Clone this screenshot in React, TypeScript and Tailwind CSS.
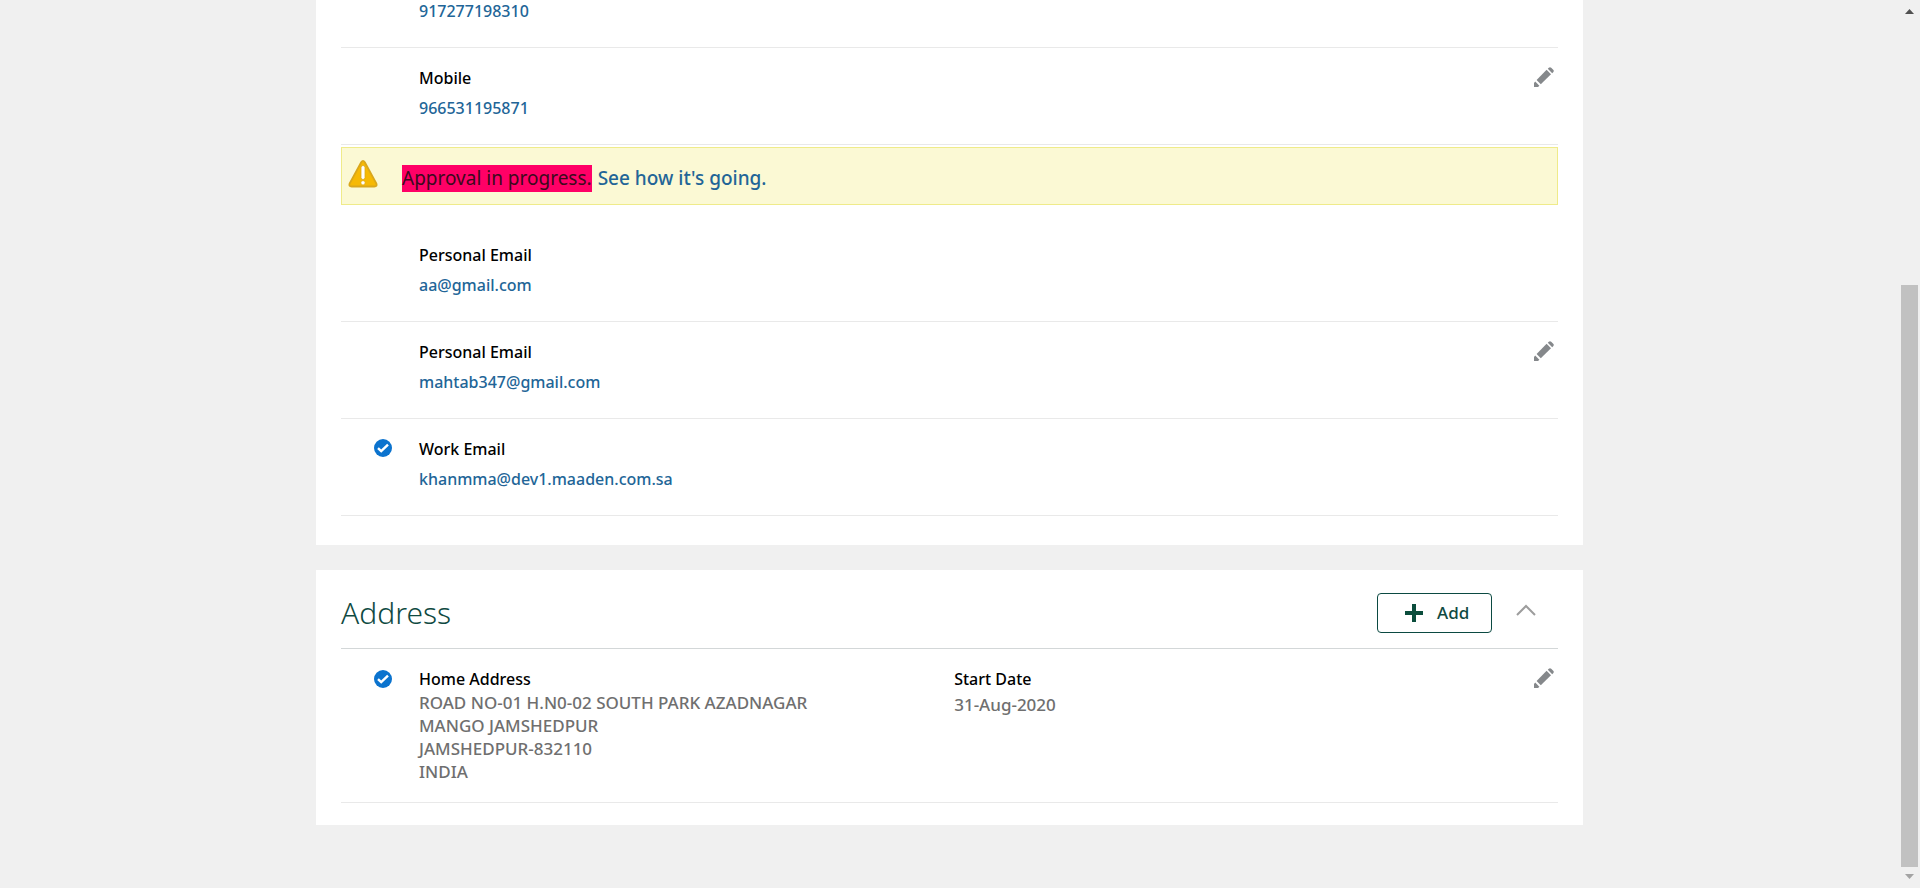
import type { ReactNode } from "react";

function PencilIcon() {
  return (
    <svg viewBox="0 0 20 20" className="size-5 fill-[#85888b]" aria-hidden="true">
      <path d="M0 20v-4l1.2-1.4 4.2 4.2L4 20z" />
      <path d="m2.6 13 10-10.2 4.4 4.4-10.2 10z" />
      <path d="m13.8 1.8 1-1q1.2-1.2 2.4 0l2 2q1.2 1.2 0 2.4l-1 1z" />
    </svg>
  );
}

function PrimaryIcon() {
  return (
    <svg viewBox="0 0 18 18" className="size-[18px]" role="img" aria-label="Primary">
      <circle cx="9" cy="9" r="9" fill="#0b73ce" />
      <path d="m4 9.2 3.2 3 6.8-6.6" fill="none" stroke="#fff" strokeWidth="2.4" />
    </svg>
  );
}

function WarningIcon() {
  return (
    <svg viewBox="0 0 30 28" className="h-7 w-[30px]" role="img" aria-label="Warning">
      <path
        d="M13.2 2.2q1.8-2.6 3.6 0l11.6 21.4q1 2.9-2 2.9H3.6q-3 0-2-2.9z"
        fill="#f6b904"
        stroke="#d9a71c"
        strokeWidth="1.8"
      />
      <rect x="13" y="5.5" width="4" height="14" rx="2" fill="#fff" stroke="#d9a71c" strokeWidth="0.8" />
      <circle cx="15" cy="22.8" r="2.1" fill="#fff" stroke="#d9a71c" strokeWidth="0.6" />
    </svg>
  );
}

function EditButton({ label }: { label: string }) {
  return (
    <button type="button" aria-label={label} className="mt-[19px] mr-1 self-start">
      <PencilIcon />
    </button>
  );
}

type ContactProps = { label: string; value: string; href: string; primary?: boolean; editable?: boolean };

function ContactRow({ label, value, href, primary, editable }: ContactProps) {
  return (
    <li className="flex border-b border-[#e9e9e9]">
      <div className="w-[78px] shrink-0 pt-5 pl-[33px]">{primary && <PrimaryIcon />}</div>
      <div className="grow pt-[15px] pb-[21px]">
        <div className="leading-[30px] text-black">{label}</div>
        <a href={href} className="block leading-[30px] text-[#226597]">
          {value}
        </a>
      </div>
      {editable && <EditButton label={`Edit ${label}`} />}
    </li>
  );
}

function Card({ children, className }: { children: ReactNode; className: string }) {
  return <section className={`bg-white pr-[25px] pl-[25px] ${className}`}>{children}</section>;
}

function ScrollBar() {
  return (
    <div aria-hidden="true" className="flex h-screen w-[21px] shrink-0 flex-col items-center pt-[9px] pb-[9px]">
      <svg viewBox="0 0 9 5" className="h-[5px] w-[9px] fill-[#505050]">
        <path d="M0 5 4.5 0 9 5z" />
      </svg>
      <div className="mt-[271px] mb-[7px] w-[17px] grow bg-[#c1c1c1]" />
      <svg viewBox="0 0 9 5" className="h-[5px] w-[9px] fill-[#a3a3a3]">
        <path d="M0 0h9L4.5 5z" />
      </svg>
    </div>
  );
}

export default function App() {
  return (
    <div className="flex h-screen overflow-hidden bg-[#f0f0f0] font-['Noto_Sans','Open_Sans',sans-serif] text-[16px] font-medium">
      <main className="min-w-0 grow">
        <div className="mx-auto flex max-w-[1267px] flex-col gap-[25px]">
          <Card className="pb-[29px]">
            <ul>
              <li className="border-b border-[#e9e9e9] pb-[25px] pl-[78px]">
                <a href="tel:917277198310" className="block leading-[22px] text-[#226597]">
                  917277198310
                </a>
              </li>
              <ContactRow label="Mobile" value="966531195871" href="tel:966531195871" editable />
            </ul>
            <div className="mt-[2px] mb-5 flex border border-[#efeb8a] bg-[#fbf9d4] pl-[6px]">
              <div className="pt-3">
                <WarningIcon />
              </div>
              <p className="ml-6 flex items-center gap-[6px] pt-[14px] pb-[10px] text-[19px] leading-[32px]">
                <span className="bg-[#ff0066] leading-[27px] font-normal text-[#3b0a1c]">Approval in progress.</span>
                <a href="#approval" className="text-[#226597]">
                  See how it's going.
                </a>
              </p>
            </div>
            <ul>
              <ContactRow label="Personal Email" value="aa@gmail.com" href="mailto:aa@gmail.com" />
              <ContactRow
                label="Personal Email"
                value="mahtab347@gmail.com"
                href="mailto:mahtab347@gmail.com"
                editable
              />
              <ContactRow
                label="Work Email"
                value="khanmma@dev1.maaden.com.sa"
                href="mailto:khanmma@dev1.maaden.com.sa"
                primary
              />
            </ul>
          </Card>

          <Card className="pb-[22px]">
            <header className="flex items-center border-b border-[#d3d7d8] pt-[22px] pb-[14px]">
              <h2 className="grow text-[30px] leading-[42px] font-light text-[#0f4a42]">Address</h2>
              <button
                type="button"
                className="flex h-10 w-[115px] items-center gap-[14px] rounded-[4px] border border-[#0b4a42] pl-[27px] text-[17px] text-[#0f4a42]"
              >
                <svg viewBox="0 0 18 18" className="size-[18px] fill-[#0b4d3c]" aria-hidden="true">
                  <path d="M7 0h4v7h7v4h-7v7H7v-7H0V7h7z" />
                </svg>
                Add
              </button>
              <button type="button" aria-label="Collapse address" className="mr-[22px] ml-6 pb-[6px]">
                <svg viewBox="0 0 20 12" className="h-3 w-5" aria-hidden="true">
                  <path d="m1 11 9-9 9 9" fill="none" stroke="#9d9d9d" strokeWidth="2" />
                </svg>
              </button>
            </header>
            <div className="flex border-b border-[#e9e9e9] pb-[19px]">
              <div className="w-[78px] shrink-0 pt-[21px] pl-[33px]">
                <PrimaryIcon />
              </div>
              <div className="flex grow pt-[19px] leading-[23px]">
                <div className="w-[48%]">
                  <div className="text-black">Home Address</div>
                  <address className="text-[17px] leading-[23px] text-[#6f6f6f] not-italic">
                    ROAD NO-01 H.N0-02 SOUTH PARK AZADNAGAR
                    <br />
                    MANGO JAMSHEDPUR
                    <br />
                    JAMSHEDPUR-832110
                    <br />
                    INDIA
                  </address>
                </div>
                <div>
                  <div className="text-black">Start Date</div>
                  <div className="pt-[2px] text-[17px] leading-[23px] text-[#6f6f6f]">31-Aug-2020</div>
                </div>
              </div>
              <EditButton label="Edit Home Address" />
            </div>
          </Card>
        </div>
      </main>
      <ScrollBar />
    </div>
  );
}
